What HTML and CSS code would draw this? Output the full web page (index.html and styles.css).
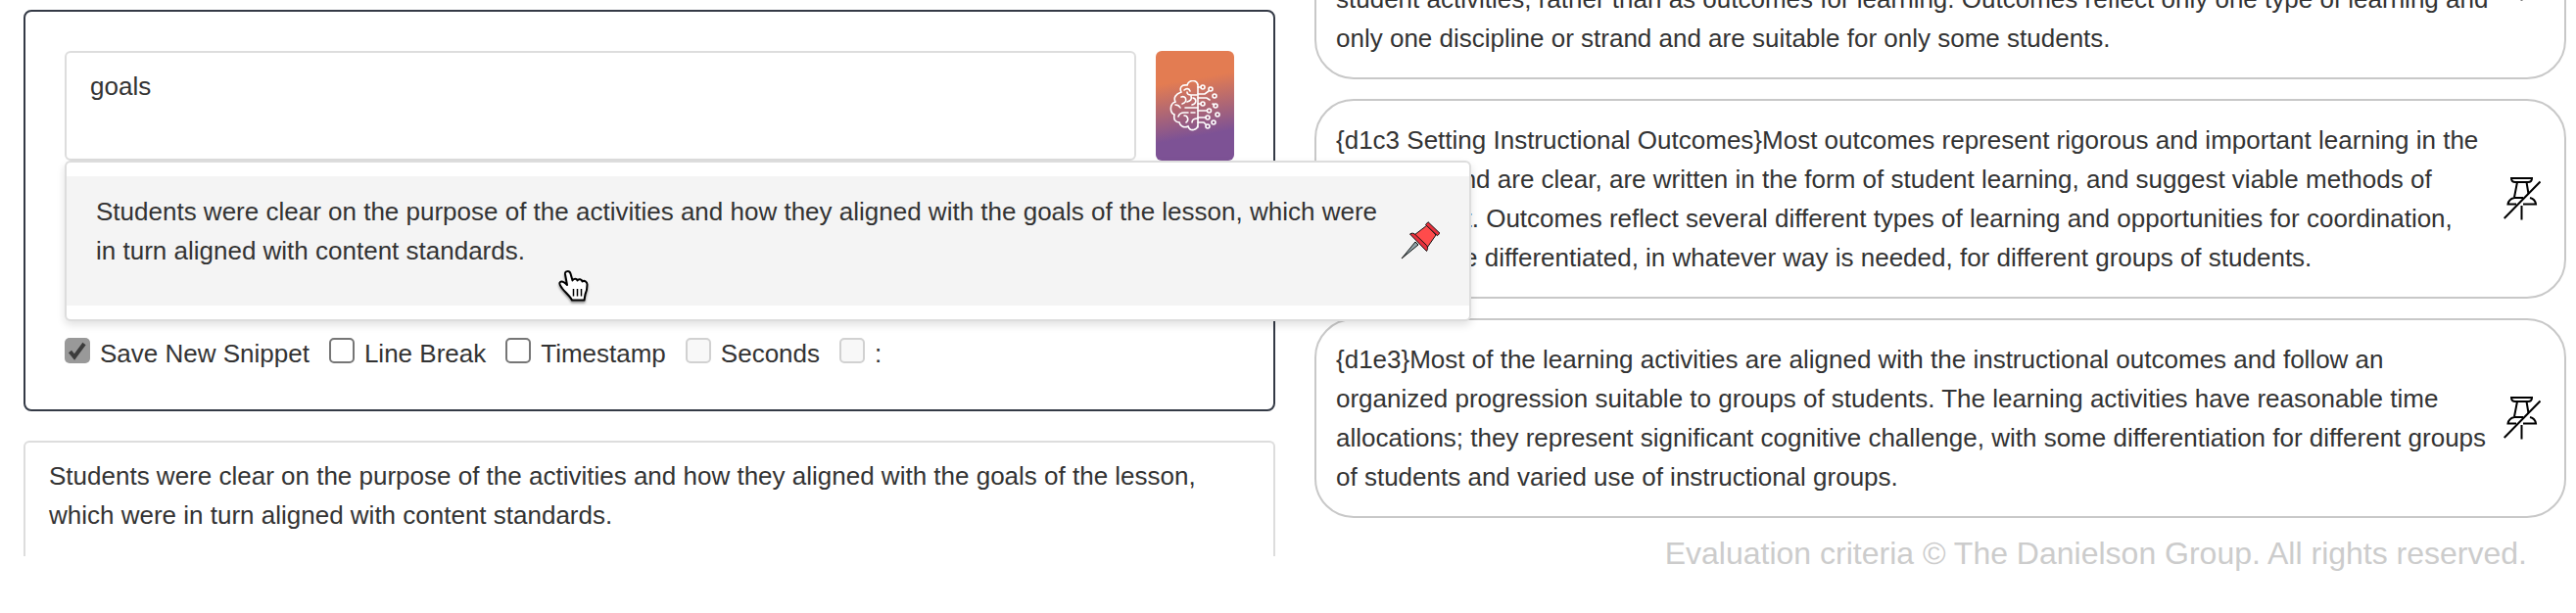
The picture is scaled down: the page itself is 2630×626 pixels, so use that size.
FILE: index.html
```html
<!DOCTYPE html>
<html lang="en">
<head>
  <meta charset="utf-8">
  <title>Observation Notes</title>
  <link rel="stylesheet" href="styles.css">
</head>
<body>
  <svg class="icon-defs">
    <symbol id="unpinned" viewBox="0 0 38 44">
      <g fill="none" stroke="#000" stroke-width="2">
        <path d="M8 1h21c0 3-2 4-4 4H12c-2 0-4-1-4-4z"/>
        <path d="M14 5l-3 15.500M23.500 5l2 12M20 21h-9c-4 1-6 3-6.500 6.500H13M27 21c4 1 5.500 3 6 6.500H20"/>
        <path d="M18.500 29v14.500M.7 42L37.500 4.500"/>
      </g>
    </symbol>
  </svg>

  <div class="page">
    <div class="notes">
      <div class="editor">
        <div class="entry">
          <textarea class="entry-text">goals</textarea>
          <button class="ai-button">
            <svg width="52" height="52" viewBox="0 0 52 52" fill="none" stroke="#fff" stroke-width="1.600" stroke-linecap="round">
              <path d="M29 4V48M29 5c-1-6-9-6-11 0c-6-1-8 3-6 7c-6 2-8 6-6 10c-6 2-6 11-1 13c-1 5 1 8 5 8c1 4 5 6 9 4c2 6 10 4 10-2"/>
              <path d="M15 10c2-2 5-2 6 1M18 12c0 2 1 3 4 3h6M12 17c5-2 7 5 1 7M18 22c4-1 5-3 4-6M24 18c4 1 4 6-1 7M6 25c2 0 4 1 5 3M16 28h13M9 37c1-3 3-4 6-4h4M22 33h4M15 36c4 0 5 5 2 7M23 43c0-3 2-4 6-4"/>
              <path d="M29 7h3M29 14h7l4-3M29 18h9l3 2M29 24h3M29 31h9M29 38h8M29 43h6l2 2M44 24l2 1"/>
              <circle cx="34" cy="7" r="2"/><circle cx="42" cy="9" r="2"/><circle cx="46" cy="16" r="2"/>
              <circle cx="34" cy="24" r="2"/><circle cx="47" cy="26" r="2"/><circle cx="40.500" cy="31" r="2"/>
              <circle cx="49" cy="35" r="2"/><circle cx="39" cy="38" r="2"/><circle cx="45" cy="43" r="2"/><circle cx="39" cy="47" r="2"/>
            </svg>
          </button>
          <div class="suggestions">
            <div class="suggestion">
              <p>Students were clear on the purpose of the activities and how they aligned with the goals of the lesson, which were<br>in turn aligned with content standards.</p>
              <svg class="pin" width="40" height="40" viewBox="0 0 40 40" stroke="#111" stroke-width="1" stroke-linejoin="round">
                <path d="M1 38l14-17 3 3z" fill="#8fa3a8"/>
                <path d="M27 4L14 14l13 13 9-13z" fill="#ff4b4b"/>
                <path d="M28 .700l12 11.500-2.500 2.500L25.500 3.500zM9.500 13c2-1.500 4-1 6 1l11 10.500c1.500 2 1.500 3.500 0 6z" fill="#e8303c"/>
              </svg>
            </div>
            <svg class="hand" width="34" height="36" viewBox="0 0 34 36" fill="#fff" stroke="#000" stroke-width="2" stroke-linejoin="round">
              <path d="M7 4c-.500-3.500 4.500-4 5.500-.500l2 7c1-2.500 4.500-2.500 5 0c1-2 4.500-1.500 5 1c2-1.500 5 0 5 3c0 5-.500 7-2 10l-1 6H14c-2-4-7-8-10-12c-2-3-4-5-2-6.500c2-1.500 5 1 7 3z"/>
              <path d="M15.500 19v7.500M19.500 19v7.500M23.500 19v7.500" stroke-width="1.500"/>
            </svg>
          </div>
        </div>
        <div class="options">
          <label><span class="box checked"><svg width="26" height="26" viewBox="0 0 26 26"><path d="M5.500 14l4.500 5.500L20 6" fill="none" stroke="#3c3c3c" stroke-width="4"/></svg></span>Save New Snippet</label>
          <label><span class="box"></span>Line Break</label>
          <label><span class="box"></span>Timestamp</label>
          <label><span class="box disabled"></span>Seconds</label>
          <label><span class="box disabled"></span>:</label>
        </div>
      </div>
      <div class="output">Students were clear on the purpose of the activities and how they aligned with the goals of the lesson,<br>which were in turn aligned with content standards.</div>
    </div>

    <div class="criteria">
      <div class="card first">
        <p>student activities, rather than as outcomes for learning. Outcomes reflect only one type of learning and<br>only one discipline or strand and are suitable for only some students.</p>
        <svg class="unpin"><use href="#unpinned"/></svg>
      </div>
      <div class="card">
        <p>{d1c3 Setting Instructional Outcomes}Most outcomes represent rigorous and important learning in the<br>discipline and are clear, are written in the form of student learning, and suggest viable methods of<br>assessment. Outcomes reflect several different types of learning and opportunities for coordination,<br>and they are differentiated, in whatever way is needed, for different groups of students.</p>
        <svg class="unpin"><use href="#unpinned"/></svg>
      </div>
      <div class="card">
        <p>{d1e3}Most of the learning activities are aligned with the instructional outcomes and follow an<br>organized progression suitable to groups of students. The learning activities have reasonable time<br>allocations; they represent significant cognitive challenge, with some differentiation for different groups<br>of students and varied use of instructional groups.</p>
        <svg class="unpin"><use href="#unpinned"/></svg>
      </div>
      <div class="copyright">Evaluation criteria © The Danielson Group. All rights reserved.</div>
    </div>
  </div>
</body>
</html>
```
FILE: styles.css
```css
* {
  box-sizing: border-box;
}

body {
  margin: 0;
  background: #fff;
  color: #333;
  font-family: "Liberation Sans", Arial, sans-serif;
  font-size: 26px;
  line-height: 40px;
}

p {
  margin: 0;
  white-space: nowrap;
}

.icon-defs {
  display: none;
}

.page {
  display: flex;
  gap: 40px;
  height: 626px;
  padding: 0 10px 0 24px;
  overflow: hidden;
}

/* Left column */
.notes {
  width: 1278px;
  height: 568px;
  padding-top: 10px;
  flex: none;
}

.editor {
  height: 410px;
  padding: 40px;
  border: 2px solid #343a46;
  border-radius: 8px;
}

.entry {
  position: relative;
  display: flex;
  gap: 20px;
  height: 112px;
}

.entry-text {
  width: 1094px;
  height: 112px;
  padding: 14px 24px;
  border: 2px solid #ddd;
  border-radius: 6px;
  outline: none;
  resize: none;
  background: #fff;
  color: #333;
  font: inherit;
}

.ai-button {
  display: flex;
  align-items: center;
  justify-content: center;
  width: 80px;
  padding: 0;
  border: none;
  border-radius: 6px;
  background: linear-gradient(170deg, #e37c52 28%, #7d5295 75%);
}

/* Suggestions drop over both columns */
.suggestions {
  position: absolute;
  top: 112px;
  left: 0;
  z-index: 10;
  width: 1436px;
  height: 164px;
  padding: 14px 0;
  border: 2px solid #ddd;
  border-radius: 6px;
  background: #fff;
  box-shadow: 0 4px 8px rgba(0, 0, 0, 0.12);
}

.suggestion {
  display: flex;
  justify-content: space-between;
  height: 132px;
  padding: 16px 30px;
  background: #f4f4f4;
}

.pin {
  margin-top: 30px;
}

.hand {
  position: absolute;
  top: 110px;
  left: 502px;
  filter: drop-shadow(0 2px 1px rgba(0, 0, 0, 0.4));
}

.options {
  display: flex;
  gap: 20px;
  margin-top: 177px;
}

.options label {
  display: flex;
  gap: 10px;
}

.box {
  width: 26px;
  height: 26px;
  margin-top: 4px;
  border: 2px solid #767676;
  border-radius: 5px;
  background: #fff;
}

.box.checked {
  border: none;
  background: #999;
}

.box.checked svg {
  display: block;
}

.box.disabled {
  border-color: #d1d1d1;
  background: #f8f8f8;
}

.output {
  height: 118px;
  margin-top: 30px;
  padding: 14px 24px;
  border: 2px solid #ddd;
  border-bottom: none;
  border-radius: 6px 6px 0 0;
}

/* Right column */
.criteria {
  display: flex;
  flex-direction: column;
  gap: 20px;
  flex: 1;
}

.card {
  display: flex;
  align-items: center;
  justify-content: space-between;
  height: 204px;
  padding: 20px 24px 20px 20px;
  border: 2px solid #c8c8c8;
  border-radius: 40px;
  flex: none;
}

.card.first {
  align-items: flex-end;
  margin-top: -123px;
}

.card.first .unpin {
  margin-bottom: 58px;
}

.unpin {
  width: 38px;
  height: 44px;
}

.copyright {
  margin-top: -4px;
  padding-right: 40px;
  color: #ccc;
  font-size: 32px;
  text-align: right;
}
```
